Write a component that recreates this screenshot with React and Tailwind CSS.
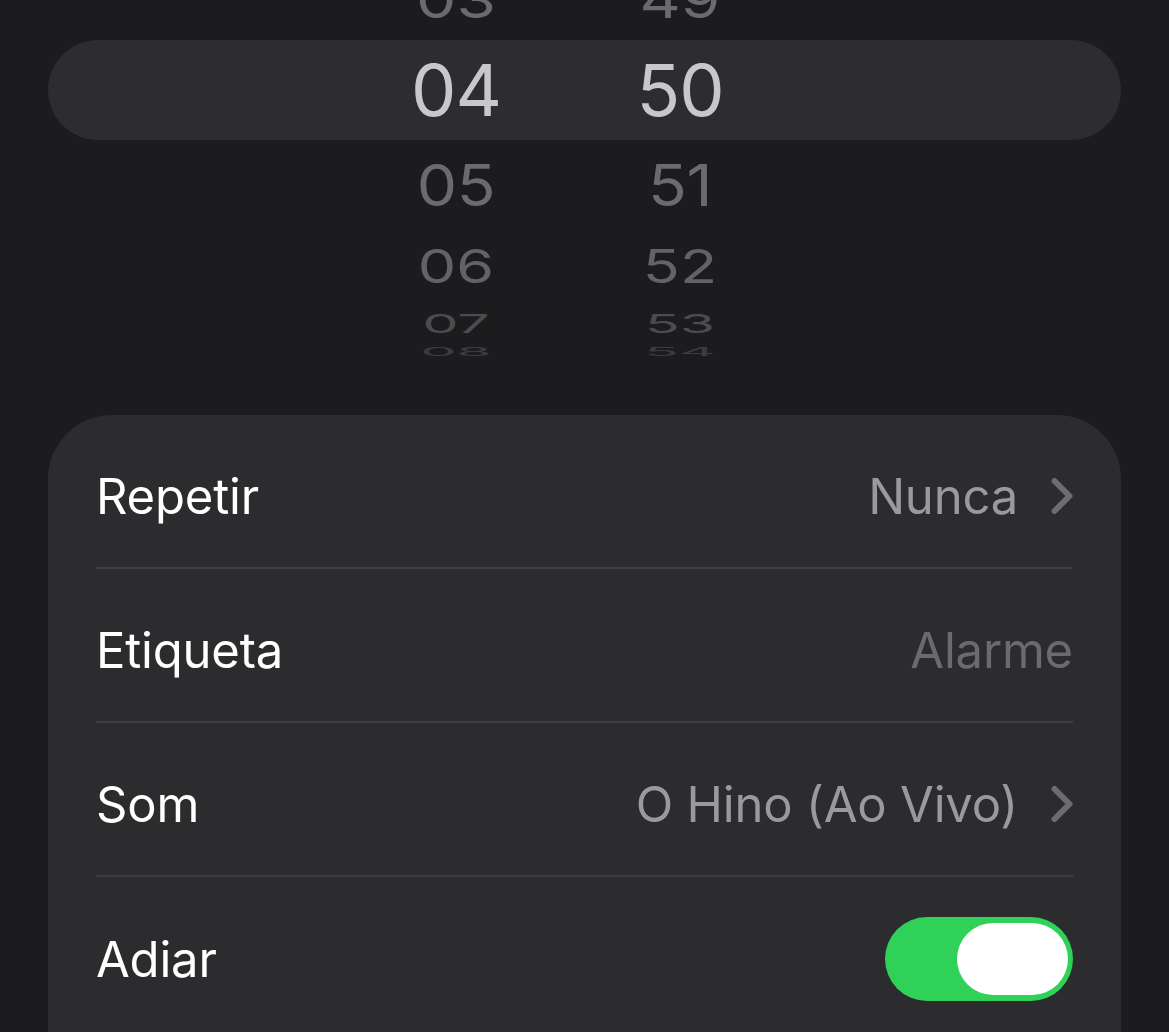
import { ChevronRight } from "lucide-react";

const font = { fontFamily: "Inter, 'Noto Sans', sans-serif" };

function PickerRow({ hour, minute, rowClass, textClass }) {
  return (
    <div className={`flex items-center pl-[328px] ${rowClass}`}>
      <div className={`w-[160px] flex justify-center ${textClass}`}>{hour}</div>
      <div className={`w-[160px] ml-[64px] flex justify-center ${textClass}`}>{minute}</div>
    </div>
  );
}

function Row({ label, value, valueClass, chevron, children, last }) {
  return (
    <div
      className={`h-[154px] pt-[10px] flex items-center justify-between ${
        last ? "" : "border-b-2 border-[#3e3e41]"
      }`}
    >
      <span className="text-[49px] text-white tracking-[-0.2px] leading-none">{label}</span>
      <div className="flex items-center">
        {value && (
          <span className={`text-[49px] leading-none tracking-[-0.2px] ${valueClass}`}>{value}</span>
        )}
        {chevron && (
          <ChevronRight className="w-[60px] h-[60px] ml-[14px] -mr-[19px] text-[#6c6c71]" strokeWidth={2.4} />
        )}
        {children}
      </div>
    </div>
  );
}

export default function App() {
  return (
    <div className="w-[1169px] h-[1032px] bg-[#1c1c1e] overflow-hidden" style={font}>
      <div className="h-[356px] overflow-hidden px-[48px]">
        <div className="-mt-[42px] flex flex-col">
          <PickerRow
            hour="03"
            minute="49"
            rowClass="h-[82px]"
            textClass="text-[64px] leading-none text-[#6b6b6f] scale-y-[0.82]"
          />
          <PickerRow
            hour="04"
            minute="50"
            rowClass="h-[100px] rounded-full bg-[#2c2c31]"
            textClass="text-[72px] leading-none text-[#c8c7cd] tracking-[-1px]"
          />
          <PickerRow
            hour="05"
            minute="51"
            rowClass="h-[90px]"
            textClass="text-[64px] leading-none text-[#6b6b6f] scale-y-[0.9] tracking-[-0.5px]"
          />
          <PickerRow
            hour="06"
            minute="52"
            rowClass="h-[72px]"
            textClass="text-[61px] leading-none text-[#636367] scale-y-[0.76]"
          />
          <PickerRow
            hour="07"
            minute="53"
            rowClass="h-[42px]"
            textClass="text-[57px] leading-none text-[#4c4c50] scale-y-[0.46]"
          />
          <PickerRow
            hour="08"
            minute="54"
            rowClass="h-[14px]"
            textClass="text-[57px] leading-none text-[#3c3c40] scale-y-[0.2]"
          />
        </div>
      </div>

      <div className="mt-[59px] mx-[48px] bg-[#2c2c2e] rounded-t-[64px] px-[48px] h-[700px]">
        <Row label="Repetir" value="Nunca" valueClass="text-[#9a99a0]" chevron />
        <Row label="Etiqueta" value="Alarme" valueClass="text-[#6b6b6f]" />
        <Row label="Som" value="O Hino (Ao Vivo)" valueClass="text-[#9a99a0]" chevron />
        <Row label="Adiar" last>
          <div className="w-[188px] h-[84px] rounded-full bg-[#30d158] flex items-center justify-end pr-[5px]">
            <div className="w-[111px] h-[72px] rounded-full bg-white" />
          </div>
        </Row>
      </div>
    </div>
  );
}
